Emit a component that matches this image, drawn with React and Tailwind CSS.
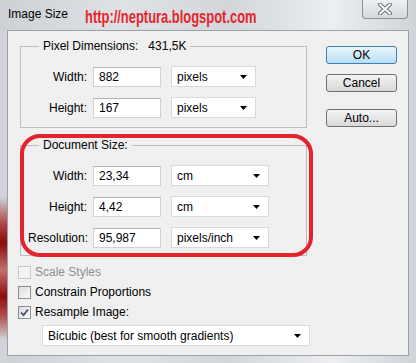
import React from "react";

function Arrow() {
    return (
        <svg width="7" height="4" viewBox="0 0 7 4">
            <path d="M0 0h7L3.5 4z" fill="#000" />
        </svg>
    );
}

function Field({ value }) {
    return (
        <div className="flex h-[20px] w-[68px] items-center border border-[#d2d2d2] border-t-[#b3b3b3] bg-white pl-[5px]">
            {value}
        </div>
    );
}

function Dropdown({ value, className }) {
    return (
        <div className={`flex h-[21px] items-center justify-between border border-[#dadada] bg-white pl-[5px] pr-[8px] ${className}`}>
            <span>{value}</span>
            <Arrow />
        </div>
    );
}

function Row({ label, value, unit, unitWidth }) {
    return (
        <div className="flex items-center">
            <div className="w-[59px] text-right">{label}</div>
            <div className="ml-[6px]">
                <Field value={value} />
            </div>
            <div className="ml-[10px]">
                <Dropdown value={unit} className={unitWidth} />
            </div>
        </div>
    );
}

function Check({ label, checked, disabled }) {
    return (
        <div className="flex h-[20px] items-center">
            <div
                className={`flex h-[13px] w-[13px] items-center justify-center border ${
                    disabled
                        ? "border-[#c8c8c8] bg-[#f4f4f4]"
                        : "border-[#8e8f8f] bg-gradient-to-br from-[#dcdcdc] to-[#fbfbfb]"
                }`}
            >
                {checked && (
                    <svg width="11" height="11" viewBox="0 0 11 11">
                        <path d="M2 5.5l2.5 2.6L9 2.5" fill="none" stroke="#3b4d7e" strokeWidth="1.7" />
                    </svg>
                )}
            </div>
            <span className={`ml-[4px] ${disabled ? "text-[#8f8f8f]" : "text-black"}`}>{label}</span>
        </div>
    );
}

function Button({ children, primary, className }) {
    return (
        <div
            className={`flex h-[18px] w-[71px] items-center justify-center rounded-[3px] border ${
                primary
                    ? "border-[#3c7fb1] bg-gradient-to-b from-[#eaf6fd] to-[#b8def4]"
                    : "border-[#707070] bg-gradient-to-b from-[#f4f4f4] to-[#d8d8d8]"
            } ${className}`}
        >
            {children}
        </div>
    );
}

export default function App() {
    return (
        <div className="flex h-[363px] w-[416px] flex-col bg-[linear-gradient(90deg,#cdd1d6_0%,#dfe2e5_30%,#d2d6da_55%,#eceef0_80%,#cfd3d8_100%)] font-['Liberation_Sans',Arial,sans-serif] text-[12px] leading-[14px] text-black">
            {/* title bar */}
            <div className="flex h-[30px] shrink-0">
                <div className="ml-[8px] mt-[7px] text-[12px]">Image Size</div>
                <div className="ml-[17px] mt-[7px] w-[170px] whitespace-nowrap">
                    <span className="inline-block origin-left scale-x-[0.68] text-[19px] font-bold leading-[20px] text-[#e3262c]">
                        http://neptura.blogspot.com
                    </span>
                </div>
                <div className="ml-auto mr-[8px] flex h-[19px] w-[46px] items-center justify-center rounded-b-[4px] border border-t-0 border-[#8b9097] bg-gradient-to-b from-[#eef0f2] to-[#d6d9dd]">
                    <svg width="16" height="12" viewBox="0 0 16 12">
                        <path d="M3 1.5l10 9M13 1.5l-10 9" stroke="#6b7078" strokeWidth="4" strokeLinecap="round" />
                        <path d="M3 1.5l10 9M13 1.5l-10 9" stroke="#fff" strokeWidth="2" strokeLinecap="round" />
                    </svg>
                </div>
            </div>

            <div className="flex flex-1">
                <div className="w-[7px] bg-[linear-gradient(to_bottom,#d0d4d9_0%,#d0d4d9_50%,#b04848_58%,#8a0b0b_64%,#c27070_72%,#8f0d0d_80%,#b35050_86%,#d0d4d9_93%)]" />

                {/* client area */}
                <div className="flex h-[326px] w-[402px] border border-[#9ca1a7] bg-[#f0f0f0]">
                    <div className="flex w-[304px] flex-col pl-[10px] pt-[8px]">
                        <fieldset className="ml-[2px] w-[287px] border border-[#bdbdbd] pb-[9px] pl-[7px] pt-[13px]">
                            <legend className="ml-[11px] px-[4px]">
                                Pixel Dimensions:&nbsp;&nbsp; 431,5K
                            </legend>
                            <div className="flex flex-col gap-[10px]">
                                <Row label="Width:" value="882" unit="pixels" unitWidth="w-[85px]" />
                                <Row label="Height:" value="167" unit="pixels" unitWidth="w-[85px]" />
                            </div>
                        </fieldset>

                        <div className="relative ml-[2px] mt-[10px] w-[287px]">
                            <fieldset className="border border-[#bdbdbd] pb-[7px] pl-[7px] pt-[13px]">
                                <legend className="ml-[11px] px-[4px]">Document Size:</legend>
                                <div className="flex flex-col gap-[10px]">
                                    <Row label="Width:" value="23,34" unit="cm" unitWidth="w-[98px]" />
                                    <Row label="Height:" value="4,42" unit="cm" unitWidth="w-[98px]" />
                                    <Row label="Resolution:" value="95,987" unit="pixels/inch" unitWidth="w-[98px]" />
                                </div>
                            </fieldset>
                            <div className="pointer-events-none absolute -bottom-[1px] -right-[6px] -top-[4px] left-0 rounded-[20px] border-[4px] border-[#e4232c]" />
                        </div>

                        <div className="mt-[6px] flex flex-col">
                            <Check label="Scale Styles" disabled />
                            <Check label="Constrain Proportions" />
                            <Check label="Resample Image:" checked />
                        </div>

                        <div className="ml-[24px] mt-[3px]">
                            <Dropdown value="Bicubic (best for smooth gradients)" className="w-[268px]" />
                        </div>
                    </div>

                    <div className="ml-[14px] flex flex-col pt-[15px]">
                        <Button primary>OK</Button>
                        <Button className="mt-[10px]">Cancel</Button>
                        <Button className="mt-[17px]">Auto...</Button>
                    </div>
                </div>

                <div className="w-[7px]" />
            </div>
        </div>
    );
}
